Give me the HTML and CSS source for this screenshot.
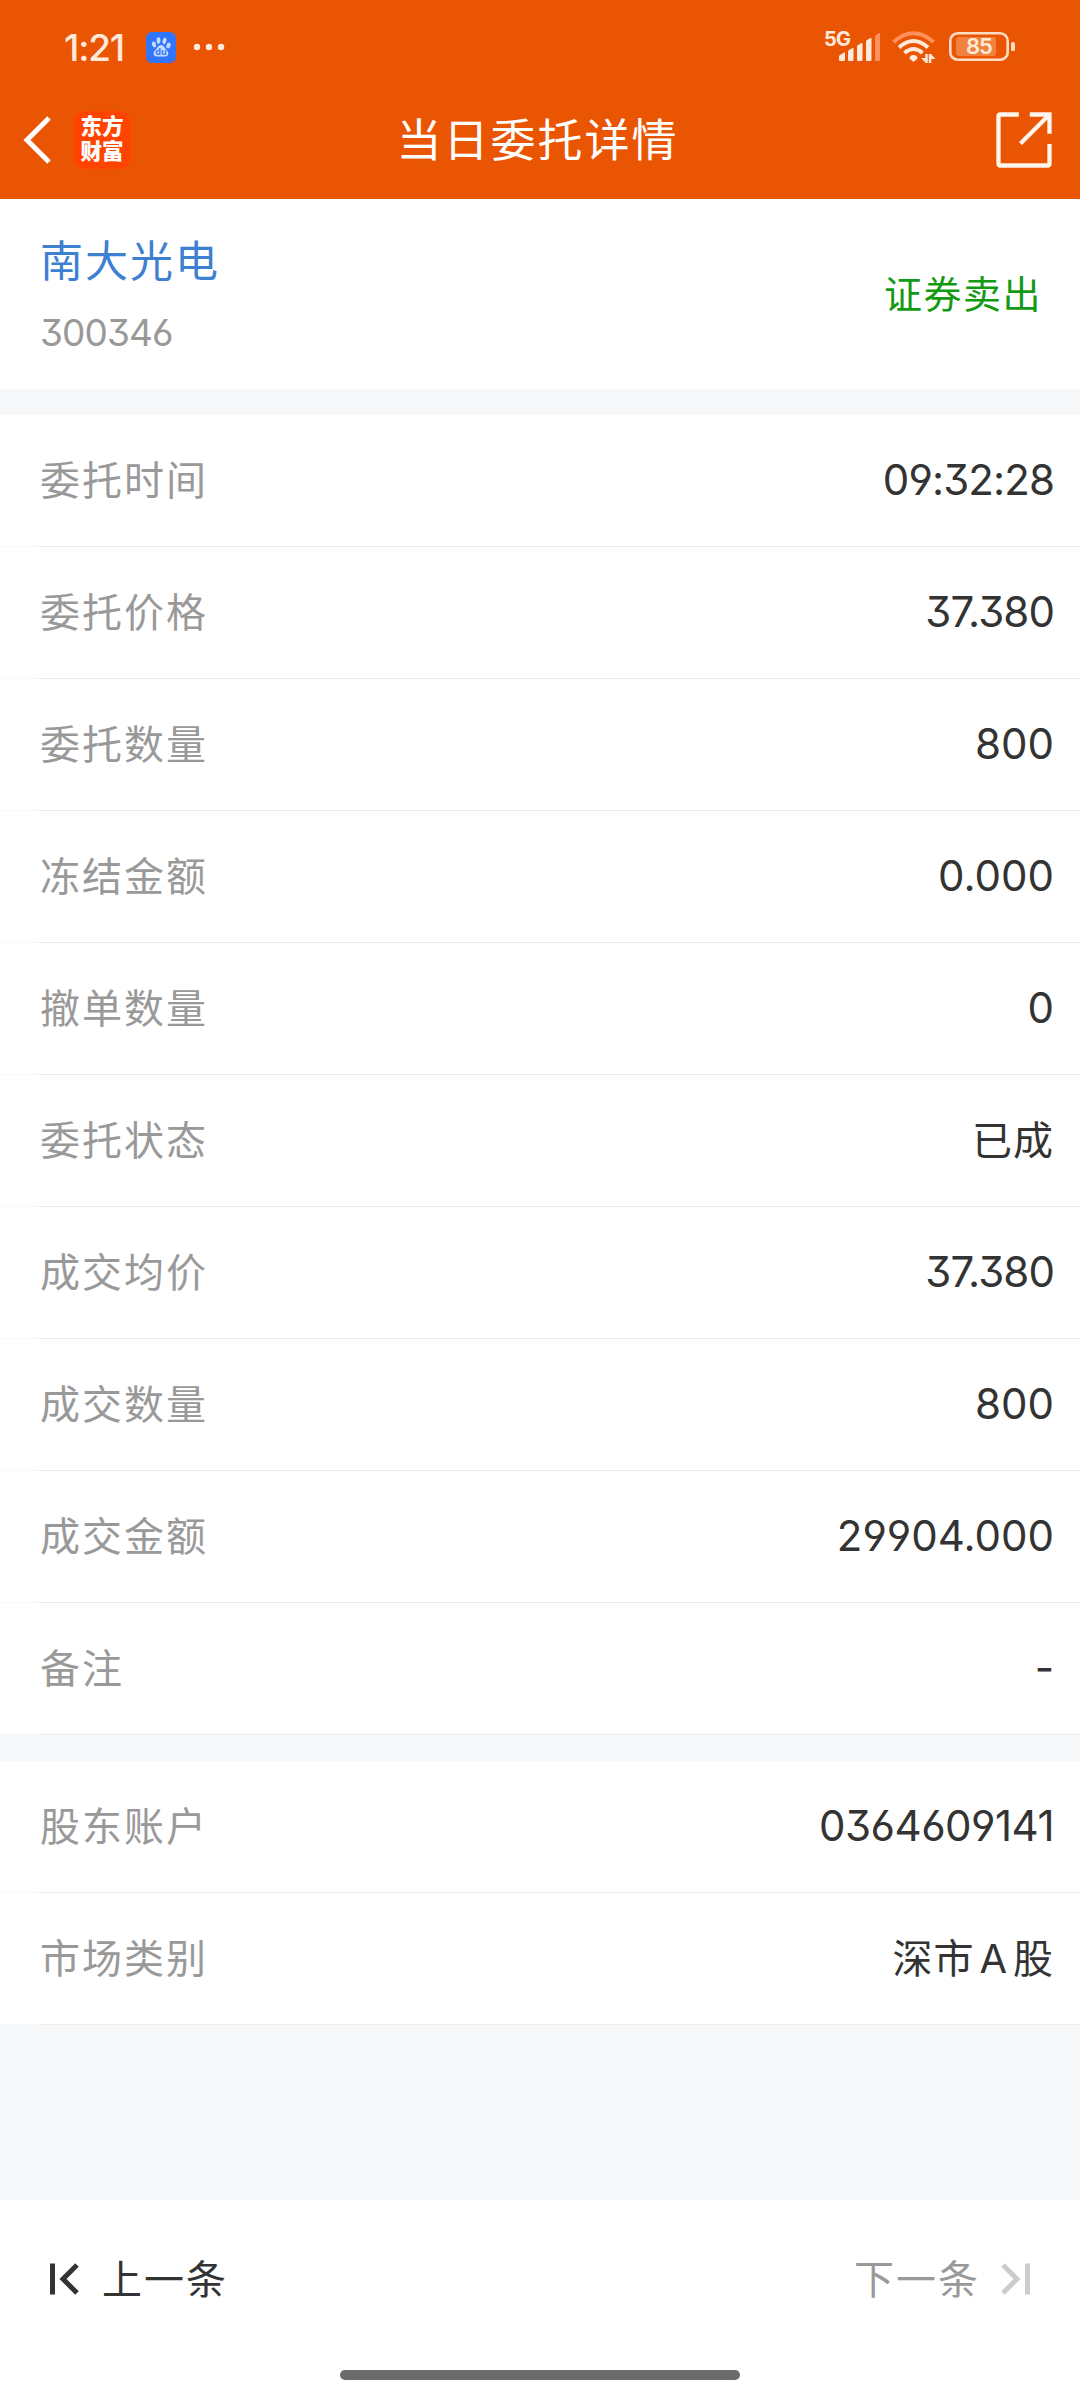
FILE: index.html
```html
<!DOCTYPE html>
<html lang="zh-CN">
<head>
  <meta charset="UTF-8">
  <meta name="viewport" content="width=device-width, initial-scale=1.0">
  <title>当日委托详情</title>
  <link rel="stylesheet" href="styles.css">
</head>
<body>
  <header>
    <div class="status-bar">
      <span class="time">1:21</span>
      <svg class="app-icon" width="32" height="32" viewBox="0 0 32 32">
        <rect x="1" y="1" width="30" height="31" rx="6" fill="#3075fb"/>
        <g fill="#c3dcff">
          <ellipse cx="9" cy="13.500" rx="2" ry="3" transform="rotate(-15 9 13.500)"/>
          <ellipse cx="13.500" cy="9.500" rx="1.900" ry="3.200"/>
          <ellipse cx="19.500" cy="10" rx="1.900" ry="3.200" transform="rotate(10 19.500 10)"/>
          <ellipse cx="23.500" cy="14.500" rx="2" ry="3" transform="rotate(20 23.500 14.500)"/>
          <path d="M16 14c3 0 4 4 6 5.500 2 2 1.500 6-1.500 6h-9c-3 0-4-4-1.500-6C12 18 13 14 16 14z"/>
        </g>
        <text class="du" x="16" y="23.500" text-anchor="middle">du</text>
      </svg>
      <svg class="dots" width="32" height="8" viewBox="0 0 32 8" fill="#ffe9da">
        <circle cx="4" cy="4" r="3.200"/>
        <circle cx="16" cy="4" r="3.200"/>
        <circle cx="28" cy="4" r="3.200"/>
      </svg>
      <svg class="signal" width="60" height="36" viewBox="0 0 60 36" fill="#ffe9da">
        <text class="net" x="0" y="17">5G</text>
        <path d="M15 31v-3.500q0-1 1-1.500l4-2.500q1-.3 1 1V31q0 1-1 1h-4q-1 0-1-1z"/>
        <path d="M24 31v-8.500q0-1 1-1.500l3.500-2q1-.3 1 1V31q0 1-1 1H25q-1 0-1-1z"/>
        <path d="M33 31V17.500q0-1 1-1.500l3.500-2q1-.3 1 1V31q0 1-1 1H34q-1 0-1-1z"/>
        <path d="M42 31V12.500q0-1 1-1.500l3.500-2q1-.3 1 1V31q0 1-1 1H43q-1 0-1-1z"/>
        <path fill="#ff925c" d="M51 31V7.500q0-1 1-1.500l3-2q1-.3 1 1V31q0 1-1 1h-3q-1 0-1-1z"/>
      </svg>
      <svg class="wifi" width="44" height="34" viewBox="0 0 44 34" fill="none" stroke-width="4">
        <path stroke="#ff925c" d="M1.500 12Q21.500-5.500 41.500 12"/>
        <path stroke="#ffe9da" d="M7 17.500q14.500-13 29 0"/>
        <path stroke="#ffe9da" d="M12.500 23q9-8 18 0"/>
        <path fill="#ffe9da" d="M21.500 32l-4-3.500q0-3.500 4-3.500t4 3.500z"/>
        <path stroke="#ffe9da" stroke-width="2.500" d="M34.500 24v9M38 33v-9"/>
        <path fill="#ffe9da" d="M29 28h4.500v4.500zM39 24l4.500 5H39z"/>
      </svg>
      <svg class="battery" width="66" height="30" viewBox="0 0 66 30">
        <rect x="1.300" y="1.300" width="57.400" height="26.400" rx="7.500" fill="none" stroke="#ffdcc2" stroke-width="2.600"/>
        <rect x="7" y="5" width="40" height="19" rx="3" fill="#f0813f"/>
        <rect x="62" y="10" width="4" height="9" rx="1.500" fill="#ffdcc2"/>
        <text class="level" x="30" y="22" text-anchor="middle">85</text>
      </svg>
    </div>

    <div class="title-bar">
      <svg class="back" width="30" height="50" viewBox="0 0 30 50">
        <path d="M26 3L4 25l22 22" fill="none" stroke="#fff" stroke-width="5"/>
      </svg>
      <div class="logo">东方<br>财富</div>
      <h1>当日委托详情</h1>
      <svg class="share" width="56" height="56" viewBox="0 0 56 56" fill="none" stroke="#fff5ea" stroke-width="4.300">
        <path d="M22.800 2.500H4.500q-2 0-2 2v47q0 2 2 2h47q2 0 2-2V32"/>
        <path d="M33.800 2.500h19.700v19.300M53 3L24.500 31.500"/>
      </svg>
    </div>
  </header>

  <section class="stock">
    <div>
      <div class="name">南大光电</div>
      <div class="code">300346</div>
    </div>
    <div class="side">证券卖出</div>
  </section>

  <section class="list">
    <div class="row"><span class="label">委托时间</span><span class="value tight">09:32:28</span></div>
    <div class="row"><span class="label">委托价格</span><span class="value tight">37.380</span></div>
    <div class="row"><span class="label">委托数量</span><span class="value">800</span></div>
    <div class="row"><span class="label">冻结金额</span><span class="value">0.000</span></div>
    <div class="row"><span class="label">撤单数量</span><span class="value">0</span></div>
    <div class="row"><span class="label">委托状态</span><span class="value zh">已成</span></div>
    <div class="row"><span class="label">成交均价</span><span class="value tight">37.380</span></div>
    <div class="row"><span class="label">成交数量</span><span class="value">800</span></div>
    <div class="row"><span class="label">成交金额</span><span class="value">29904.000</span></div>
    <div class="row"><span class="label">备注</span><span class="value">-</span></div>
  </section>

  <section class="list">
    <div class="row"><span class="label">股东账户</span><span class="value account">0364609141</span></div>
    <div class="row"><span class="label">市场类别</span><span class="value zh">深市<span class="latin">A</span>股</span></div>
  </section>

  <footer>
    <div class="pager">
      <div class="prev">
        <svg width="30" height="32" viewBox="0 0 30 32" fill="none" stroke="#333" stroke-width="5">
          <path d="M2.500 .5v31M27 2L13 16l14 14"/>
        </svg>
        <span>上一条</span>
      </div>
      <div class="next">
        <span>下一条</span>
        <svg width="30" height="32" viewBox="0 0 30 32" fill="none" stroke="#ccc" stroke-width="5">
          <path d="M27.500 .5v31M3 2l14 14L3 30"/>
        </svg>
      </div>
    </div>
    <div class="home-bar"></div>
  </footer>
</body>
</html>
```

FILE: styles.css
```css
* {
  box-sizing: border-box;
}
body {
  margin: 0;
  height: 2400px;
  display: flex;
  flex-direction: column;
  background-color: #f7f8fa;
  color: #333;
  font-family: Inter, "Noto Sans CJK SC", sans-serif;
  /* open 6 and 9, flat-top 3 */
  font-feature-settings: "cv03", "cv04", "cv09";
}
header {
  height: 199px;
  background-color: #ea5504;
  color: #fff;
}
.status-bar {
  height: 94px;
  display: flex;
  align-items: center;
  padding-left: 64px;
  padding-right: 65px;
}
.time {
  width: 81px;
  font-size: 37px;
  font-weight: 500;
  letter-spacing: -1.200px;
  color: #ffe9da;
}
.dots {
  margin-left: 16px;
}
.du {
  font-size: 9px;
  font-weight: 700;
  fill: #3075fb;
}
.signal {
  margin-left: auto;
  overflow: visible;
}
.net {
  font-size: 20px;
  font-weight: 700;
  letter-spacing: -0.800px;
}
.wifi {
  margin-left: 8px;
}
.battery {
  margin-left: 13px;
}
.level {
  font-size: 22px;
  font-weight: 600;
  letter-spacing: -1px;
  fill: #ffe9da;
}
.title-bar {
  height: 92px;
  display: grid;
  grid-template-columns: 50px 248px 1fr 242px 56px;
  align-items: center;
  padding: 0 28px 0 23px;
}
.logo {
  width: 58px;
  height: 58px;
  padding-top: 3px;
  border-radius: 12px;
  background-color: #ff4400;
  font-size: 21.500px;
  font-weight: 900;
  line-height: 25px;
  text-align: center;
}
h1 {
  margin: 0;
  padding-bottom: 5px;
  font-size: 45px;
  font-weight: 400;
  letter-spacing: 2px;
  text-align: center;
  white-space: nowrap;
}
.share {
  grid-column: 5;
}
.stock {
  height: 190px;
  display: flex;
  justify-content: space-between;
  align-items: center;
  padding: 0 38px 0 40px;
  background-color: #fff;
}
.name {
  padding-top: 2px;
  font-size: 43px;
  line-height: 64px;
  letter-spacing: 2px;
  color: #3d7fd0;
}
.code {
  margin-top: 12px;
  font-size: 37px;
  line-height: 56px;
  letter-spacing: -0.900px;
  color: #999;
}
.side {
  padding-bottom: 6px;
  font-size: 38px;
  letter-spacing: 1.500px;
  color: #139a13;
}
.list {
  margin-top: 26px;
}
.row {
  height: 132px;
  display: flex;
  justify-content: space-between;
  align-items: center;
  padding: 0 26px 3px 40px;
  background: linear-gradient(to right, #f7f8fa 39px, #ececec 39px) bottom / 100% 1px no-repeat #fff;
}
.label {
  padding-bottom: 3px;
  font-size: 40px;
  letter-spacing: 2px;
  color: #999;
}
.value {
  font-size: 42px;
}
.tight {
  letter-spacing: -0.900px;
}
.account {
  letter-spacing: -0.500px;
}
.zh {
  padding-bottom: 3px;
  font-size: 40px;
  letter-spacing: 1px;
}
.latin {
  margin: 0 5px;
}
footer {
  height: 200px;
  margin-top: auto;
  background-color: #fff;
}
.pager {
  height: 158px;
  display: flex;
  justify-content: space-between;
  padding: 0 50px;
  font-size: 40px;
  letter-spacing: 2px;
}
.pager span {
  padding-bottom: 5px;
}
.prev,
.next {
  display: flex;
  align-items: center;
}
.prev {
  gap: 22px;
}
.next {
  gap: 20px;
  color: #999;
}
.home-bar {
  width: 400px;
  height: 10px;
  margin: 12px auto 0;
  border-radius: 5px;
  background-color: #6b6b6b;
}
```
